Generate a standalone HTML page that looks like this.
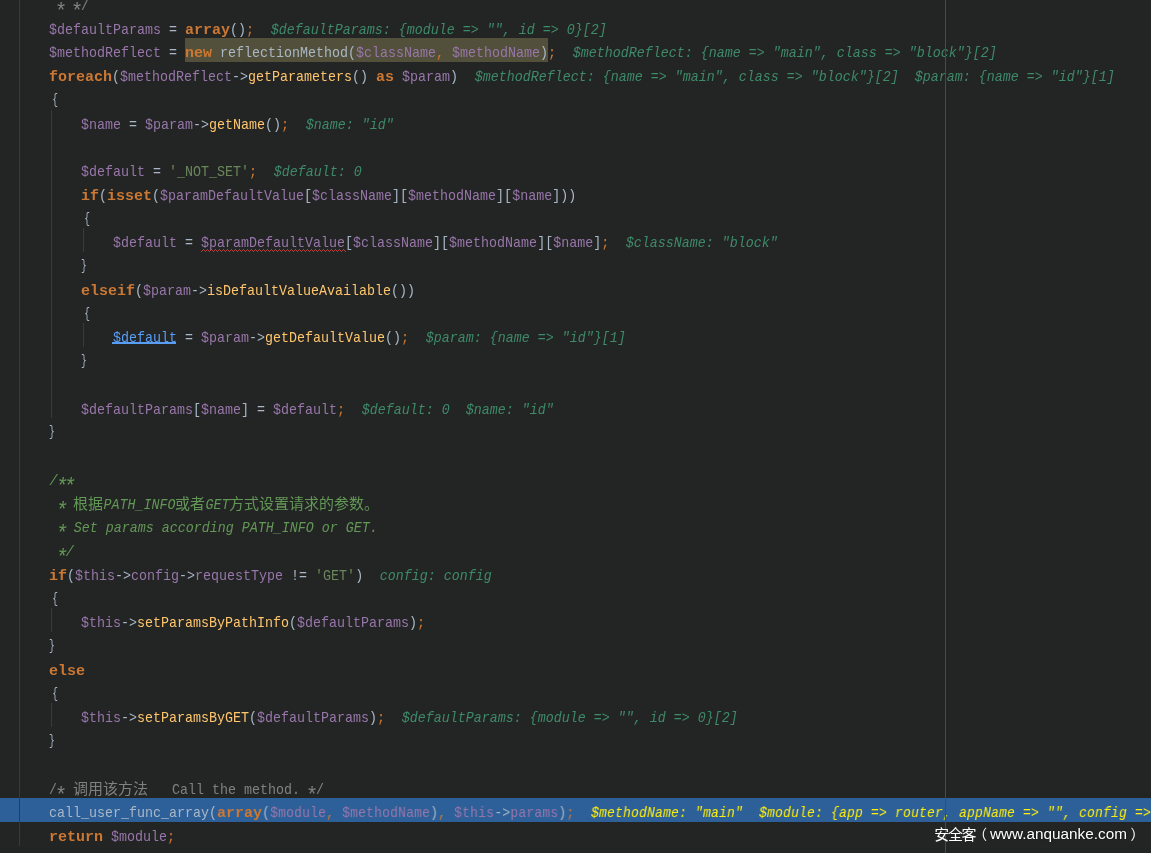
<!DOCTYPE html>
<html><head><meta charset="utf-8"><title>editor</title>
<style>
html,body{margin:0;padding:0;background:#232525;}
#ed{position:relative;width:1151px;height:853px;overflow:hidden;background:#232525;font-family:"Liberation Mono",monospace;font-size:15px;line-height:24px;color:#A9B7C6;}
#ed div,#ed svg{position:absolute;}
.r,.b{white-space:pre;height:24px;transform-origin:0 0;}
.r{transform:scaleX(0.88889);}
.b{transform:scaleX(1.00000);font-weight:bold;color:#CC7832;}
b{font-weight:normal;position:relative;}
.st{font-size:22.8px;margin:0 -2.34px;top:7.5px;line-height:0;}
.bl,.br{display:inline-block;top:-1.5px;transform:scaleX(.72);}
.bl{left:0.9px;transform-origin:100% 50%;}
.br{left:0.3px;transform-origin:0 50%;}
.i,.y,.c{position:relative;left:0.7px;}
.v{color:#9876AA;}
.f{color:#FFC66D;}
.o{color:#CC7832;}
.s{color:#6A8759;}
.i{color:#3E8A69;font-style:italic;}
.c{color:#629755;font-style:italic;}
.g{color:#808080;}
.y{color:#FFEE08;font-style:italic;}
.l{color:#589DF6;}
.e{color:#9876AA;}
.bar{background:#2D6099;left:0;width:1151px;}
.hl{background:#52503A;}
.gl{background:#393B3B;width:1px;}
.ig{background:#393B3B;width:1px;}
.rm{background:#4A4A4A;width:1px;}
#wm{font-family:"Liberation Sans",sans-serif;font-size:15.3px;color:#fff;white-space:pre;line-height:20px;text-shadow:0 0 2px rgba(0,0,0,.8);}
#tx{left:0;top:0;width:1151px;height:853px;will-change:transform;}
.cj{font-family:"Liberation Sans","Noto Sans CJK SC",sans-serif;font-size:15px;line-height:19.5px;height:19.5px;white-space:pre;}
</style></head><body>
<div id="ed">
<div class="bar" style="top:798px;height:24px"></div>
<div class="hl" style="left:185px;top:38px;width:363px;height:24px"></div>
<div class="gl" style="left:19px;top:0;height:846px"></div>
<div class="ig" style="left:51px;top:110px;height:308px"></div>
<div class="ig" style="left:83px;top:228px;height:24px"></div>
<div class="ig" style="left:83px;top:323px;height:24px"></div>
<div class="ig" style="left:51px;top:608px;height:24px"></div>
<div class="ig" style="left:51px;top:703px;height:24px"></div>
<div id="tx">
<div class="r" style="left:49px;top:-5px"><span class="g"> <b class="st">*</b> <b class="st">*</b>/</span></div>
<div class="r" style="left:49px;top:19px"><span class="v">$defaultParams</span> = </div>
<div class="b" style="left:185px;top:19px">array</div>
<div class="r" style="left:230px;top:19px">()<span class="o">;</span>  <span class="i">$defaultParams: {module =&gt; "", id =&gt; 0}[2]</span></div>
<div class="r" style="left:49px;top:42px"><span class="v">$methodReflect</span> = </div>
<div class="b" style="left:185px;top:42px">new</div>
<div class="r" style="left:212px;top:42px"> reflectionMethod(<span class="v">$className</span><span class="o">, </span><span class="v">$methodName</span>)<span class="o">;</span>  <span class="i">$methodReflect: {name =&gt; "main", class =&gt; "block"}[2]</span></div>
<div class="b" style="left:49px;top:66px">foreach</div>
<div class="r" style="left:112px;top:66px">(<span class="v">$methodReflect</span>-&gt;<span class="f">getParameters</span>() </div>
<div class="b" style="left:376px;top:66px">as</div>
<div class="r" style="left:394px;top:66px"> <span class="v">$param</span>)  <span class="i">$methodReflect: {name =&gt; "main", class =&gt; "block"}[2]  $param: {name =&gt; "id"}[1]</span></div>
<div class="r" style="left:49px;top:90px"><b class="bl">{</b></div>
<div class="r" style="left:81px;top:114px"><span class="v">$name</span> = <span class="v">$param</span>-&gt;<span class="f">getName</span>()<span class="o">;</span>  <span class="i">$name: "id"</span></div>
<div class="r" style="left:81px;top:161px"><span class="v">$default</span> = <span class="s">'_NOT_SET'</span><span class="o">;</span>  <span class="i">$default: 0</span></div>
<div class="b" style="left:81px;top:185px">if</div>
<div class="r" style="left:99px;top:185px">(</div>
<div class="b" style="left:107px;top:185px">isset</div>
<div class="r" style="left:152px;top:185px">(<span class="v">$paramDefaultValue</span>[<span class="v">$className</span>][<span class="v">$methodName</span>][<span class="v">$name</span>]))</div>
<div class="r" style="left:81px;top:209px"><b class="bl">{</b></div>
<div class="r" style="left:113px;top:232px"><span class="v">$default</span> = <span class="e">$paramDefaultValue</span>[<span class="v">$className</span>][<span class="v">$methodName</span>][<span class="v">$name</span>]<span class="o">;</span>  <span class="i">$className: "block"</span></div>
<div class="r" style="left:81px;top:256px"><b class="br">}</b></div>
<div class="b" style="left:81px;top:280px">elseif</div>
<div class="r" style="left:135px;top:280px">(<span class="v">$param</span>-&gt;<span class="f">isDefaultValueAvailable</span>())</div>
<div class="r" style="left:81px;top:304px"><b class="bl">{</b></div>
<div class="r" style="left:113px;top:327px"><span class="l">$default</span> = <span class="v">$param</span>-&gt;<span class="f">getDefaultValue</span>()<span class="o">;</span>  <span class="i">$param: {name =&gt; "id"}[1]</span></div>
<div class="r" style="left:81px;top:351px"><b class="br">}</b></div>
<div class="r" style="left:81px;top:399px"><span class="v">$defaultParams</span>[<span class="v">$name</span>] = <span class="v">$default</span><span class="o">;</span>  <span class="i">$default: 0  $name: "id"</span></div>
<div class="r" style="left:49px;top:422px"><b class="br">}</b></div>
<div class="r" style="left:49px;top:470px"><span class="c">/<b class="st">*</b><b class="st">*</b></span></div>
<div class="r" style="left:49px;top:494px"><span class="c"> <b class="st">*</b> </span></div>
<div class="cj" style="left:73px;top:494px;color:#629755">根据</div>
<div class="r" style="left:103px;top:494px"><span class="c">PATH_INFO</span></div>
<div class="cj" style="left:175px;top:494px;color:#629755">或者</div>
<div class="r" style="left:205px;top:494px"><span class="c">GET</span></div>
<div class="cj" style="left:229px;top:494px;color:#629755">方式设置请求的参数。</div>
<div class="r" style="left:49px;top:517px"><span class="c"> <b class="st">*</b> Set params according PATH_INFO or GET.</span></div>
<div class="r" style="left:49px;top:541px"><span class="c"> <b class="st">*</b>/</span></div>
<div class="b" style="left:49px;top:565px">if</div>
<div class="r" style="left:67px;top:565px">(<span class="v">$this</span>-&gt;<span class="v">config</span>-&gt;<span class="v">requestType</span> != <span class="s">'GET'</span>)  <span class="i">config: config</span></div>
<div class="r" style="left:49px;top:589px"><b class="bl">{</b></div>
<div class="r" style="left:81px;top:612px"><span class="v">$this</span>-&gt;<span class="f">setParamsByPathInfo</span>(<span class="v">$defaultParams</span>)<span class="o">;</span></div>
<div class="r" style="left:49px;top:636px"><b class="br">}</b></div>
<div class="b" style="left:49px;top:660px">else</div>
<div class="r" style="left:49px;top:684px"><b class="bl">{</b></div>
<div class="r" style="left:81px;top:707px"><span class="v">$this</span>-&gt;<span class="f">setParamsByGET</span>(<span class="v">$defaultParams</span>)<span class="o">;</span>  <span class="i">$defaultParams: {module =&gt; "", id =&gt; 0}[2]</span></div>
<div class="r" style="left:49px;top:731px"><b class="br">}</b></div>
<div class="r" style="left:49px;top:779px"><span class="g">/<b class="st">*</b> </span></div>
<div class="cj" style="left:73px;top:779px;color:#808080">调用该方法</div>
<div class="r" style="left:148px;top:779px"><span class="g">   Call the method. <b class="st">*</b>/</span></div>
<div class="r" style="left:49px;top:802px">call_user_func_array(</div>
<div class="b" style="left:217px;top:802px">array</div>
<div class="r" style="left:262px;top:802px">(<span class="v">$module</span><span class="o">, </span><span class="v">$methodName</span>)<span class="o">, </span><span class="v">$this</span>-&gt;<span class="v">params</span>)<span class="o">;</span>  <span class="y">$methodName: "main"  $module: {app =&gt; router, appName =&gt; "", config =&gt; {debug</span></div>
<div class="b" style="left:49px;top:826px">return</div>
<div class="r" style="left:103px;top:826px"> <span class="v">$module</span><span class="o">;</span></div>
</div>
<svg style="left:201px;top:249px" width="145" height="3" shape-rendering="crispEdges"><path fill="#BC3F3C" d="M0 2h1v1h-1zM1 1h1v1h-1zM2 0h1v1h-1zM3 1h1v1h-1zM4 2h1v1h-1zM5 1h1v1h-1zM6 0h1v1h-1zM7 1h1v1h-1zM8 2h1v1h-1zM9 1h1v1h-1zM10 0h1v1h-1zM11 1h1v1h-1zM12 2h1v1h-1zM13 1h1v1h-1zM14 0h1v1h-1zM15 1h1v1h-1zM16 2h1v1h-1zM17 1h1v1h-1zM18 0h1v1h-1zM19 1h1v1h-1zM20 2h1v1h-1zM21 1h1v1h-1zM22 0h1v1h-1zM23 1h1v1h-1zM24 2h1v1h-1zM25 1h1v1h-1zM26 0h1v1h-1zM27 1h1v1h-1zM28 2h1v1h-1zM29 1h1v1h-1zM30 0h1v1h-1zM31 1h1v1h-1zM32 2h1v1h-1zM33 1h1v1h-1zM34 0h1v1h-1zM35 1h1v1h-1zM36 2h1v1h-1zM37 1h1v1h-1zM38 0h1v1h-1zM39 1h1v1h-1zM40 2h1v1h-1zM41 1h1v1h-1zM42 0h1v1h-1zM43 1h1v1h-1zM44 2h1v1h-1zM45 1h1v1h-1zM46 0h1v1h-1zM47 1h1v1h-1zM48 2h1v1h-1zM49 1h1v1h-1zM50 0h1v1h-1zM51 1h1v1h-1zM52 2h1v1h-1zM53 1h1v1h-1zM54 0h1v1h-1zM55 1h1v1h-1zM56 2h1v1h-1zM57 1h1v1h-1zM58 0h1v1h-1zM59 1h1v1h-1zM60 2h1v1h-1zM61 1h1v1h-1zM62 0h1v1h-1zM63 1h1v1h-1zM64 2h1v1h-1zM65 1h1v1h-1zM66 0h1v1h-1zM67 1h1v1h-1zM68 2h1v1h-1zM69 1h1v1h-1zM70 0h1v1h-1zM71 1h1v1h-1zM72 2h1v1h-1zM73 1h1v1h-1zM74 0h1v1h-1zM75 1h1v1h-1zM76 2h1v1h-1zM77 1h1v1h-1zM78 0h1v1h-1zM79 1h1v1h-1zM80 2h1v1h-1zM81 1h1v1h-1zM82 0h1v1h-1zM83 1h1v1h-1zM84 2h1v1h-1zM85 1h1v1h-1zM86 0h1v1h-1zM87 1h1v1h-1zM88 2h1v1h-1zM89 1h1v1h-1zM90 0h1v1h-1zM91 1h1v1h-1zM92 2h1v1h-1zM93 1h1v1h-1zM94 0h1v1h-1zM95 1h1v1h-1zM96 2h1v1h-1zM97 1h1v1h-1zM98 0h1v1h-1zM99 1h1v1h-1zM100 2h1v1h-1zM101 1h1v1h-1zM102 0h1v1h-1zM103 1h1v1h-1zM104 2h1v1h-1zM105 1h1v1h-1zM106 0h1v1h-1zM107 1h1v1h-1zM108 2h1v1h-1zM109 1h1v1h-1zM110 0h1v1h-1zM111 1h1v1h-1zM112 2h1v1h-1zM113 1h1v1h-1zM114 0h1v1h-1zM115 1h1v1h-1zM116 2h1v1h-1zM117 1h1v1h-1zM118 0h1v1h-1zM119 1h1v1h-1zM120 2h1v1h-1zM121 1h1v1h-1zM122 0h1v1h-1zM123 1h1v1h-1zM124 2h1v1h-1zM125 1h1v1h-1zM126 0h1v1h-1zM127 1h1v1h-1zM128 2h1v1h-1zM129 1h1v1h-1zM130 0h1v1h-1zM131 1h1v1h-1zM132 2h1v1h-1zM133 1h1v1h-1zM134 0h1v1h-1zM135 1h1v1h-1zM136 2h1v1h-1zM137 1h1v1h-1zM138 0h1v1h-1zM139 1h1v1h-1zM140 2h1v1h-1zM141 1h1v1h-1zM142 0h1v1h-1zM143 1h1v1h-1zM144 2h1v1h-1z"/></svg>
<div style="left:112px;top:342px;width:64px;height:2px;background:#589DF6"></div>
<div class="rm" style="left:945px;top:0;height:853px"></div>
<div class="cj" style="left:934.3px;top:825.3px;color:#fff;letter-spacing:-1.4px">安全客</div>
<div class="cj" style="left:973px;top:824.5px;color:#fff;font-size:14px;line-height:18.2px;height:18.2px">（</div>
<div id="wm" style="left:990px;top:824px">www.anquanke.com</div>
<div class="cj" style="left:1130.5px;top:824.5px;color:#fff;font-size:14px;line-height:18.2px;height:18.2px">）</div>
</div>
</body></html>
